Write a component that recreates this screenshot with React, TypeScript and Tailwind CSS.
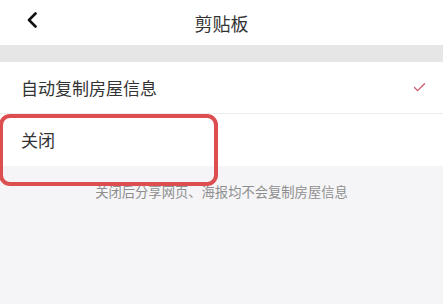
import { Check } from 'lucide-react';

const font = { fontFamily: '"Noto Sans CJK SC", "Noto Sans", sans-serif' };

function BackIcon() {
  return (
    <svg width="12" height="16" viewBox="0 0 12 16" fill="none">
      <path d="M9.5 1.5 L3 8 L9.5 14.5" stroke="#111" strokeWidth="2.6" strokeLinecap="round" strokeLinejoin="round" />
    </svg>
  );
}

export default function App() {
  return (
    <div className="relative w-[443px] h-[304px] bg-[#f5f5f7] overflow-hidden" style={font}>
      <div className="relative h-[45px] bg-white flex items-center justify-center">
        <div className="absolute left-[26px] top-[12px]">
          <BackIcon />
        </div>
        <span className="text-[18px] text-[#333] leading-none">剪贴板</span>
      </div>
      <div className="h-[17px] bg-[#e6e6e6]" />
      <div className="bg-white">
        <div className="h-[52px] flex items-center justify-between pl-[21px] pr-[16px] border-b border-[#ececec]">
          <span className="text-[17px] text-[#333]">自动复制房屋信息</span>
          <Check size={15} strokeWidth={2} className="text-[#c9566b]" />
        </div>
        <div className="h-[52px] flex items-center pl-[21px]">
          <span className="text-[17px] text-[#333]">关闭</span>
        </div>
      </div>
      <p className="mt-[16px] text-center text-[13.3px] leading-[20px] text-[#8e8e8e]">
        关闭后分享网页、海报均不会复制房屋信息
      </p>
      <div className="absolute left-[-1px] top-[114px] w-[219px] h-[72px] border-[4px] border-[#dc4e50] rounded-[11px]" />
    </div>
  );
}
